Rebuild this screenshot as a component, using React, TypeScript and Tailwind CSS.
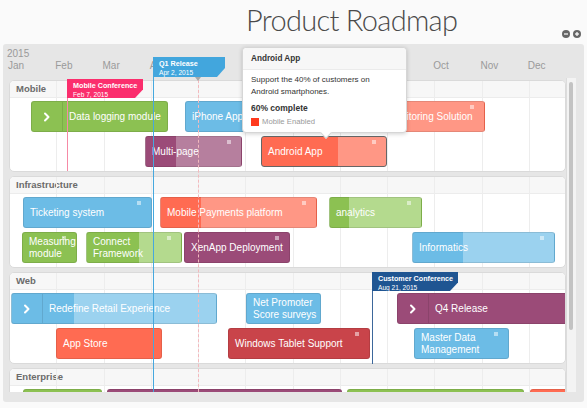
import React from "react";

type Tone = "green" | "blue" | "red" | "purple" | "crimson";

const TONES: Record<Tone, { d: string; l: string }> = {
  green: { d: "#8cc152", l: "#b4da8e" },
  blue: { d: "#6cbce6", l: "#9bd2ef" },
  red: { d: "#ff6b52", l: "#ff9785" },
  purple: { d: "#9b4b78", l: "#b67f9e" },
  crimson: { d: "#c9444a", l: "#c9444a" },
};

// x / e / p are page x positions (start, end, end of completed part)
type Bar = {
  t: string;
  x: number;
  e: number;
  tone: Tone;
  p?: number;
  chev?: boolean;
  mark?: boolean;
  sel?: boolean;
};

const MONTHS = ["Jan", "Feb", "Mar", "Apr", "May", "Jun", "Jul", "Aug", "Sep", "Oct", "Nov", "Dec"];

const SECTIONS: { name: string; rows: Bar[][] }[] = [
  {
    name: "Mobile",
    rows: [
      [
        { t: "Data logging module", x: 31, e: 168, tone: "green", chev: true },
        { t: "iPhone App", x: 185, e: 292, tone: "blue" },
        { t: "Monitoring Solution", x: 380, e: 485, tone: "red", p: 400, mark: true },
      ],
      [
        { t: "Multi-page", x: 145, e: 242, tone: "purple", p: 175, mark: true },
        { t: "Android App", x: 261, e: 387, tone: "red", p: 337, mark: true, sel: true },
      ],
    ],
  },
  {
    name: "Infrastructure",
    rows: [
      [
        { t: "Ticketing system", x: 23, e: 152, tone: "blue", mark: true },
        { t: "Mobile Payments platform", x: 160, e: 317, tone: "red", p: 200, mark: true },
        { t: "analytics", x: 329, e: 422, tone: "green", p: 348, mark: true },
      ],
      [
        { t: "Measuring\nmodule", x: 22, e: 77, tone: "green", mark: true },
        { t: "Connect\nFramework", x: 86, e: 182, tone: "green", p: 138, mark: true },
        { t: "XenApp Deployment", x: 184, e: 290, tone: "purple", mark: true },
        { t: "Informatics", x: 412, e: 555, tone: "blue", p: 462, mark: true },
      ],
    ],
  },
  {
    name: "Web",
    rows: [
      [
        { t: "Redefine Retail Experience", x: 11, e: 217, tone: "blue", p: 73, chev: true },
        { t: "Net Promoter\nScore surveys", x: 246, e: 321, tone: "blue" },
        { t: "Q4 Release", x: 397, e: 600, tone: "purple", chev: true },
      ],
      [
        { t: "App Store", x: 56, e: 162, tone: "red" },
        { t: "Windows Tablet Support", x: 228, e: 370, tone: "crimson", mark: true },
        { t: "Master Data\nManagement", x: 414, e: 509, tone: "blue", mark: true },
      ],
    ],
  },
  {
    name: "Enterprise",
    rows: [
      [
        { t: "", x: 23, e: 102, tone: "green" },
        { t: "", x: 107, e: 342, tone: "purple" },
        { t: "", x: 347, e: 524, tone: "green" },
        { t: "", x: 530, e: 600, tone: "red" },
      ],
      [],
    ],
  },
];

function Chevron() {
  return (
    <svg width="8" height="10" viewBox="0 0 8 10">
      <polyline points="2,1.5 5.5,5 2,8.5" fill="none" stroke="white" strokeWidth="2" strokeLinecap="round" strokeLinejoin="round" />
    </svg>
  );
}

function BarBox({ b }: { b: Bar }) {
  const c = TONES[b.tone];
  const fill = b.p ? `linear-gradient(to right, ${c.d} ${b.p - b.x}px, ${c.l} ${b.p - b.x}px)` : c.d;
  return (
    <div
      className={`absolute top-0 h-[31px] rounded-[3px] border flex items-center overflow-hidden text-white text-[10px] leading-[12px] ${
        b.sel ? "border-[#666]" : "border-black/10"
      }`}
      style={{ left: b.x - 10, width: b.e - b.x, background: fill }}
    >
      {b.chev && (
        <div className="w-[31px] h-full shrink-0 flex items-center justify-center border-r border-black/10">
          <Chevron />
        </div>
      )}
      {b.t && <span className="whitespace-pre pl-[6px]">{b.t}</span>}
      {b.mark && <div className="absolute right-[10px] top-[3px] w-[4px] h-[4px] bg-white/50" />}
    </div>
  );
}

function Section({ name, rows }: { name: string; rows: Bar[][] }) {
  return (
    <div className="relative h-[92px] shrink-0 bg-white border border-[#dadada] rounded-[5px] overflow-hidden">
      <div className="h-[17px] bg-[#f7f7f7] border-b border-[#ececec] pl-[6px] text-[9.5px] leading-[16px] font-bold text-[#6b6b6b]">
        {name}
      </div>
      <div className="absolute inset-0 flex">
        {MONTHS.map((m) => (
          <div key={m} className="w-[47.25px] shrink-0 border-r border-[#ededed]" />
        ))}
      </div>
      <div className="flex flex-col gap-[4px] pt-[3px]">
        {rows.map((r, i) => (
          <div key={i} className="relative h-[31px]">
            {r.map((b) => (
              <BarBox key={b.x} b={b} />
            ))}
          </div>
        ))}
      </div>
    </div>
  );
}

function Milestone({ title, date, color, className }: { title: string; date: string; color: string; className: string }) {
  return (
    <div
      className={`absolute pl-[6px] pt-[3px] text-white [clip-path:polygon(0_0,100%_0,100%_55%,calc(100%-8px)_100%,0_100%)] ${className}`}
      style={{ background: color }}
    >
      <div className="text-[7.2px] leading-[8px] font-bold">{title}</div>
      <div className="text-[6.6px] leading-[8px] mt-[1px]">{date}</div>
    </div>
  );
}

export default function App() {
  return (
    <div className="relative w-[587px] h-[408px] overflow-hidden bg-[#fafafa] font-['Liberation_Sans',Arial,sans-serif]">
      <div className="h-[44px] flex">
        <h1 className="ml-[246px] mt-[3px] font-['Lato',sans-serif] font-light text-[29px] leading-[34px] tracking-[-0.7px] text-[#4a4a4a]">
          Product Roadmap
        </h1>
        <div className="ml-auto mr-[6px] mt-[30px] flex gap-[3px]">
          <svg width="8" height="8" viewBox="0 0 8 8">
            <circle cx="4" cy="4" r="4" fill="#666" />
            <rect x="2" y="3.4" width="4" height="1.2" fill="white" />
          </svg>
          <svg width="8" height="8" viewBox="0 0 8 8">
            <circle cx="4" cy="4" r="4" fill="#666" />
            <rect x="2" y="3.4" width="4" height="1.2" fill="white" />
            <rect x="3.4" y="2" width="1.2" height="4" fill="white" />
          </svg>
        </div>
      </div>

      <div className="mx-[3px] h-[358px] bg-[#e6e6e6] rounded-[3px] flex flex-col">
        <div className="h-[34px] pt-[4px] pl-[4px] text-[10px] leading-[12px] text-[#9a9a9a]">
          <div>2015</div>
          <div className="flex pl-[1px]">
            {MONTHS.map((m) => (
              <div key={m} className="w-[47.25px] shrink-0">
                {m}
              </div>
            ))}
          </div>
        </div>
        <div className="h-[314px] flex pl-[6px]">
          <div className="w-[557px] flex flex-col gap-[4px] pt-[2px] overflow-hidden">
            {SECTIONS.map((s) => (
              <Section key={s.name} name={s.name} rows={s.rows} />
            ))}
          </div>
          <div className="w-[10px] h-full bg-[#f3f3f3] border-l border-[#dcdcdc] pt-[4px] pl-[2px]">
            <div className="w-[4px] h-[248px] rounded-full bg-[#c3c3c3]" />
          </div>
        </div>
      </div>

      {/* today marker */}
      <div className="absolute left-[198px] top-[80px] h-[312px] border-l border-dashed border-[#f3b9bd]" />
      <div className="absolute left-[195px] top-[77px] border-x-[3px] border-t-[4px] border-x-transparent border-t-[#a8a8a8]" />

      {/* milestones */}
      <div className="absolute left-[153px] top-[57px] h-[335px] w-px bg-[#46a8de]" />
      <Milestone title="Q1 Release" date="Apr 2, 2015" color="#42a6dd" className="left-[153px] top-[57px] w-[72px] h-[20px]" />

      <div className="absolute left-[67px] top-[98px] h-[73px] w-px bg-[#f68aa6]" />
      <Milestone title="Mobile Conference" date="Feb 7, 2015" color="#fb2e6d" className="left-[67px] top-[79px] w-[76px] h-[19px]" />

      <div className="absolute left-[372px] top-[291px] h-[73px] w-px bg-[#3d679b]" />
      <Milestone title="Customer Conference" date="Aug 21, 2015" color="#1f5592" className="left-[372px] top-[272px] w-[86px] h-[19px]" />

      {/* tooltip */}
      <div className="absolute left-[242px] top-[47px] w-[165px] h-[86px] bg-white border border-[#d6d6d6] rounded-[4px] shadow-[0_1px_4px_rgba(0,0,0,0.18)]">
        <div className="h-[22px] bg-[#f7f7f7] border-b border-[#ebebeb] rounded-t-[4px] pl-[8px] text-[8.2px] leading-[21px] font-bold text-[#333]">
          Android App
        </div>
        <div className="px-[8px] pt-[4px] text-[#333]">
          <div className="text-[8px] leading-[12px]">Support the 40% of customers on Android smartphones.</div>
          <div className="mt-[4px] text-[8.5px] leading-[12px] font-bold">60% complete</div>
          <div className="mt-[2px] flex items-center gap-[3px]">
            <div className="w-[8px] h-[8px] bg-[#ff3a1e]" />
            <span className="text-[7.7px] leading-[12px] text-[#9a9a9a]">Mobile Enabled</span>
          </div>
        </div>
        <div className="absolute left-[79px] -bottom-[5px] w-[8px] h-[8px] bg-white rotate-45 border-r border-b border-[#d6d6d6]" />
      </div>
    </div>
  );
}
